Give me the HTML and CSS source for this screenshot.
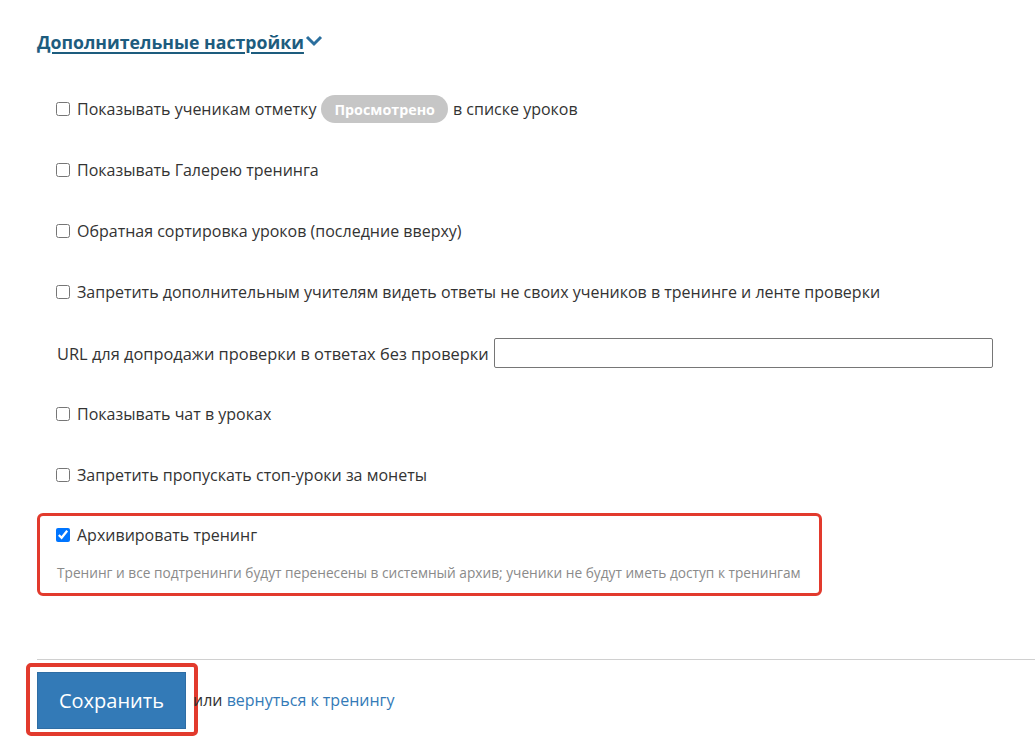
FILE: index.html
```html
<!DOCTYPE html>
<html lang="ru">
<head>
<meta charset="utf-8">
<link rel="stylesheet" href="styles.css">
</head>
<body>
<div class="page">
  <h3 class="section-title"><a href="#" class="toggle">Дополнительные настройки</a><svg class="chev" viewBox="0 0 18 12" width="18" height="12"><path d="M2 2 L9 9 L16 2" fill="none" stroke="#2b6f9e" stroke-width="3" stroke-linejoin="miter"/></svg></h3>

  <div class="options">
    <label class="row"><input type="checkbox" class="cb"><span>Показывать ученикам отметку</span><span class="badge">Просмотрено</span><span>в списке уроков</span></label>
    <label class="row"><input type="checkbox" class="cb"><span>Показывать Галерею тренинга</span></label>
    <label class="row"><input type="checkbox" class="cb"><span>Обратная сортировка уроков (последние вверху)</span></label>
    <label class="row"><input type="checkbox" class="cb"><span>Запретить дополнительным учителям видеть ответы не своих учеников в тренинге и ленте проверки</span></label>
    <div class="row url-row"><span class="url-label">URL для допродажи проверки в ответах без проверки</span><input type="text" class="url-input"></div>
    <label class="row"><input type="checkbox" class="cb"><span>Показывать чат в уроках</span></label>
    <label class="row"><input type="checkbox" class="cb"><span>Запретить пропускать стоп-уроки за монеты</span></label>
  </div>

  <div class="archive-box">
    <label class="row"><input type="checkbox" class="cb" checked><span>Архивировать тренинг</span></label>
    <p class="hint">Тренинг и все подтренинги будут перенесены в системный архив; ученики не будут иметь доступ к тренингам</p>
  </div>

  <div class="footer">
    <span class="save-wrap"><button class="save">Сохранить</button></span>
    <span class="or">или <a href="#" class="back">вернуться к тренингу</a></span>
  </div>
</div>
</body>
</html>
```

FILE: styles.css
```css
html, body {
  margin: 0;
  padding: 0;
  background: #fff;
}
body {
  font-family: "Open Sans", "Liberation Sans", sans-serif;
  font-size: 16px;
  color: #333;
}
.page {
  padding: 30px 0 0 37px;
}
.section-title {
  margin: 0;
  height: 24px;
  display: flex;
  align-items: center;
  font-size: 17.7px;
  font-weight: 700;
}
.toggle {
  color: #1d5c7e;
  text-decoration: underline;
  text-underline-offset: 3px;
  text-decoration-thickness: 2px;
}
.chev {
  margin-left: 1px;
  margin-top: -2px;
}
.options {
  margin-top: 45px;
  padding-left: 19px;
  display: flex;
  flex-direction: column;
  gap: 41px;
}
.row {
  display: flex;
  align-items: center;
  height: 20px;
  white-space: nowrap;
}
.cb {
  width: 14px;
  height: 14px;
  margin: 0 7px 0 0;
  flex: none;
}
.badge {
  display: inline-flex;
  align-items: center;
  height: 28px;
  padding: 0 13px;
  margin: 0 5px 0 5px;
  border-radius: 14px;
  background: #c6c6c6;
  color: #fff;
  font-weight: 700;
  font-size: 14.3px;
}
.url-row {
  margin-left: 1px;
}
.url-label {
  font-size: 16.4px;
}
.url-input {
  margin-left: 5px;
  width: 499px;
  height: 30px;
  box-sizing: border-box;
  border: 1px solid #767676;
  border-radius: 2px;
  padding: 2px 4px;
  font: inherit;
}
.archive-box {
  margin-top: 28px;
  width: 785px;
  box-sizing: border-box;
  border: 3px solid #e23a2d;
  border-radius: 6px;
  padding: 9px 16px 11px 16px;
}
.hint {
  margin: 19px 0 0 1px;
  font-size: 13.7px;
  line-height: 18px;
  color: #8a8a8a;
  white-space: nowrap;
}
.footer {
  margin-top: 63px;
  border-top: 1px solid #d0d0d0;
  padding-top: 3px;
  display: flex;
  align-items: center;
}
.save-wrap {
  margin-left: -11px;
  border: 4px solid #e23a2d;
  border-radius: 5px;
  padding: 5px 8px 3px 7px;
  background: #fff;
  display: inline-flex;
}
.save {
  width: 149px;
  height: 57px;
  border: 1px solid #2e6da4;
  background: #337ab7;
  color: #fff;
  font-family: inherit;
  font-size: 20px;
  padding: 0;
  border-radius: 0;
}
.or {
  margin-left: -5px;
  color: #333;
}
.back {
  color: #337ab7;
  text-decoration: none;
}
```
